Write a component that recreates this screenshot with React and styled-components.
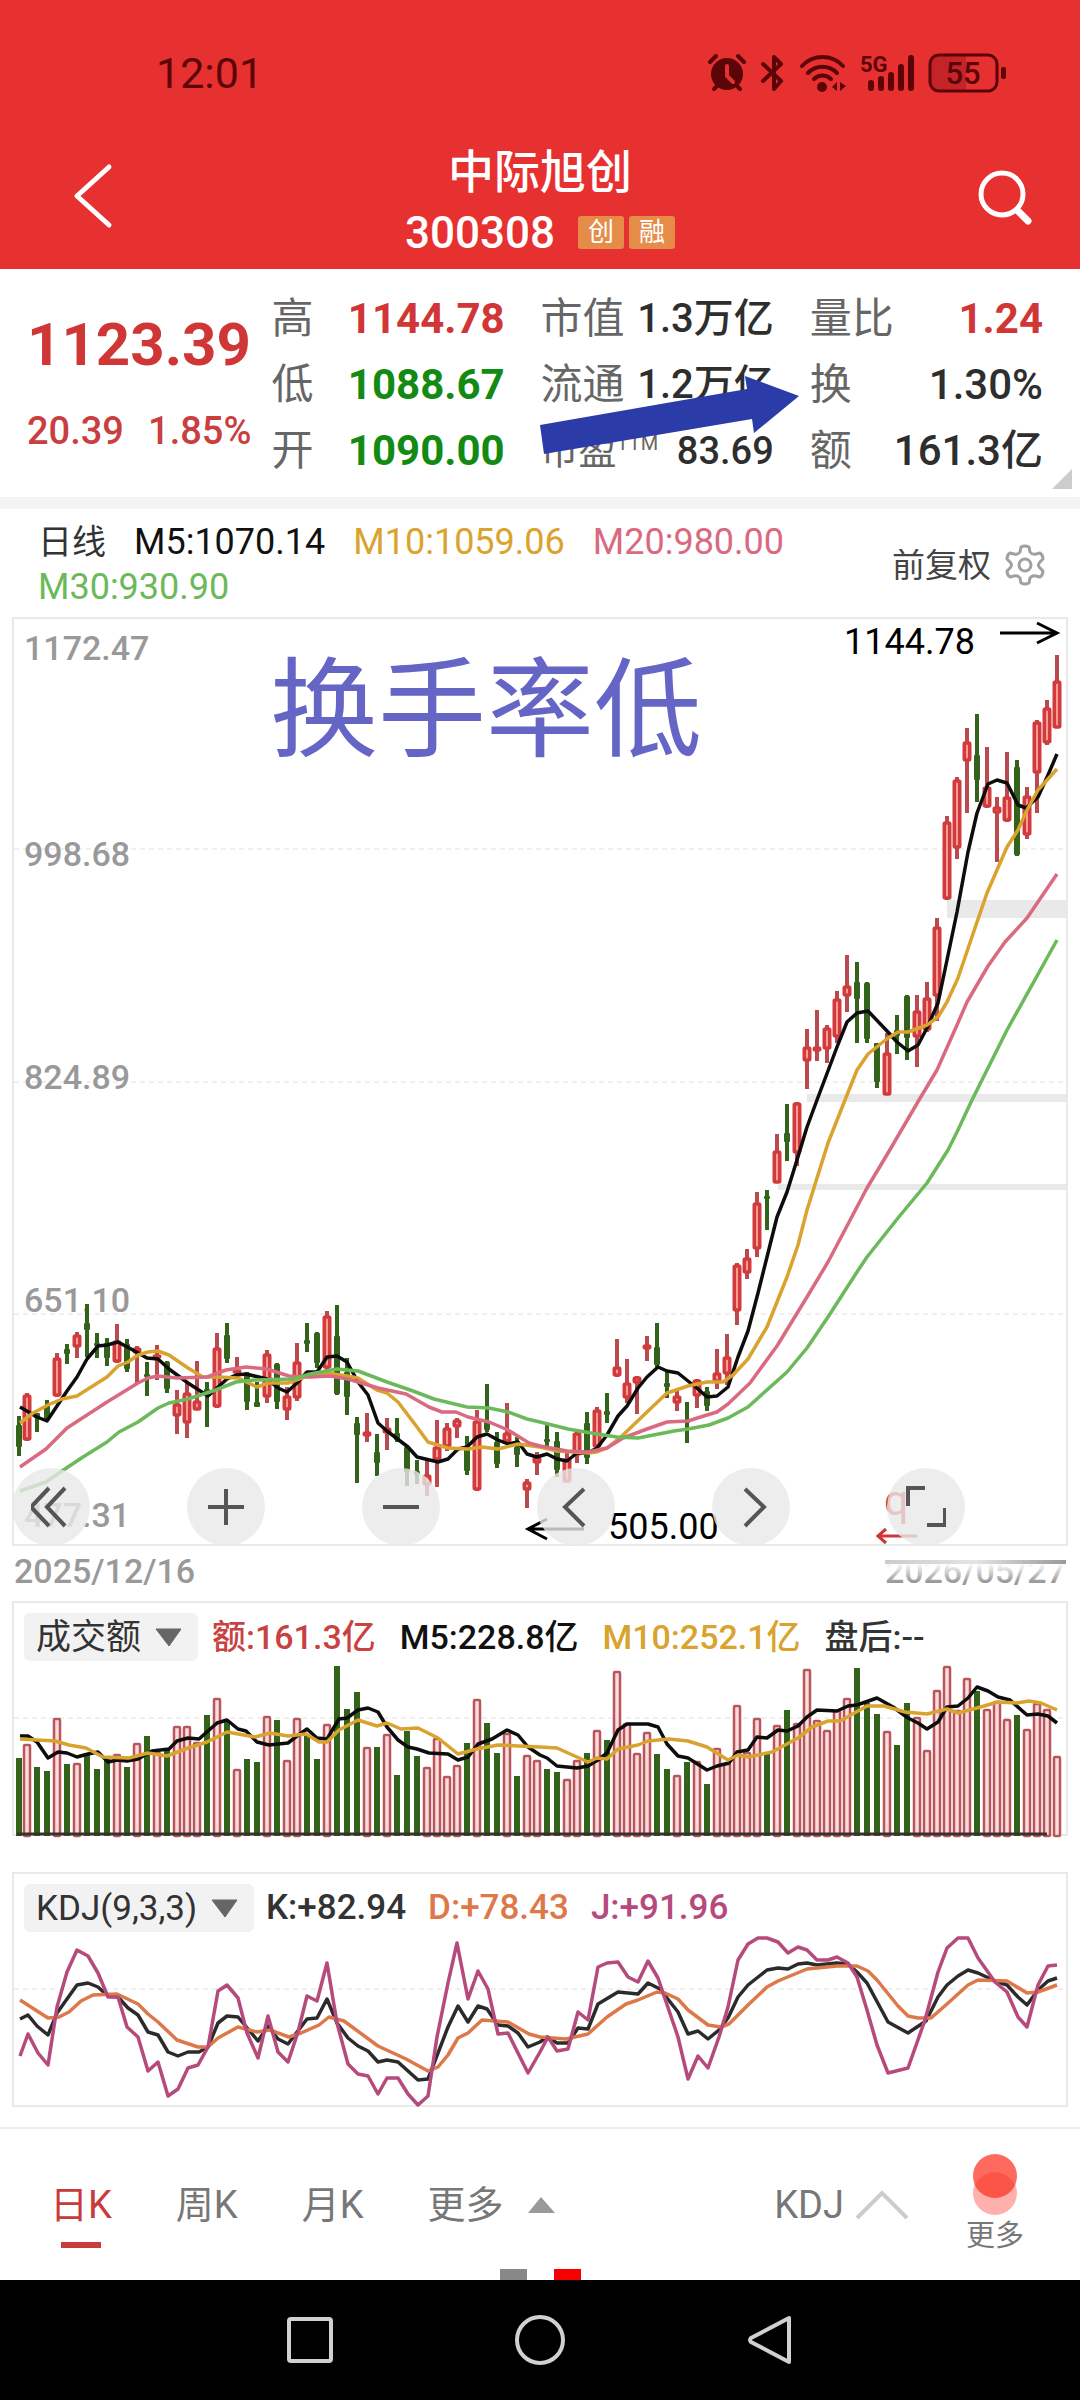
import React, { useState } from 'react';
import styled, { createGlobalStyle } from 'styled-components';

const GlobalStyle = createGlobalStyle`
  * {
    box-sizing: border-box;
  }

  body {
    margin: 0;
    background: #fff;
    font-family: Roboto, 'Noto Sans CJK SC', sans-serif;
  }

  button,
  select {
    font-family: inherit;
    color: inherit;
    background: none;
    border: 0;
    padding: 0;
    margin: 0;
    cursor: pointer;
  }

  svg {
    display: block;
  }
`;

const Page = styled.div`
  display: flex;
  flex-direction: column;
  min-height: 100vh;
`;

const Header = styled.header`
  background: #e73030;
  color: #fff;
`;

const StatusBar = styled.div`
  display: flex;
  align-items: center;
  justify-content: space-between;
  height: 146px;
  padding: 0 72px 0 156px;
  color: #5c0508;
  font-size: 43px;
`;

const TitleBar = styled.div`
  display: grid;
  grid-template-columns: 1fr auto 1fr;
  align-items: center;
  height: 123px;
  padding: 0 46px;
`;

const TitleBlock = styled.div`
  text-align: center;
`;

const HeaderButton = styled.button`
  justify-self: ${(props) => (props.$end ? 'end' : 'start')};
  padding: ${(props) => (props.$end ? '0 0 22px' : '0 0 22px 22px')};
`;

const Title = styled.h1`
  margin: 0;
  font-size: 46px;
  font-weight: 500;
  line-height: 50px;
`;

const CodeLine = styled.div`
  display: flex;
  align-items: center;
  height: 72px;
  font-size: 44px;
  font-weight: 500;
`;

const Tag = styled.span`
  width: 46px;
  margin-left: ${(props) => (props.$first ? 23 : 5)}px;
  border-radius: 3px;
  background: #e58d48;
  font-size: 26px;
  font-weight: 400;
  line-height: 33px;
`;

const Quote = styled.section`
  position: relative;
  display: grid;
  grid-template-columns: 224fr 770fr;
  column-gap: 20px;
  padding: 17px 37px 13px 27px;
  border-bottom: 12px solid #f4f4f4;
`;

const PriceBlock = styled.div`
  color: #d13636;
  padding-top: 19px;
`;

const Price = styled.div`
  font-size: 60px;
  font-weight: 700;
  line-height: 80px;
`;

const Change = styled.div`
  display: flex;
  justify-content: space-between;
  color: #c93e3e;
  font-size: 38px;
  font-weight: 500;
  line-height: 92px;
`;

const Stats = styled.dl`
  display: grid;
  grid-template-columns: repeat(3, 1fr);
  column-gap: 36px;
  margin: 0;
`;

const Stat = styled.div`
  display: flex;
  justify-content: space-between;
  line-height: 66px;
  white-space: nowrap;

  dt {
    color: #666;
    font-size: ${(props) => props.$label || 42}px;
  }

  dd {
    margin: 0;
    color: ${(props) => props.$color || '#2e2e2e'};
    font-size: ${(props) => props.$size || 42}px;
    font-weight: ${(props) => (props.$color ? 700 : 500)};
  }

  sup {
    font-size: 20px;
    line-height: 0;
  }
`;

const Pointer = styled.svg`
  position: absolute;
  left: 50%;
  top: 105px;
`;

const Corner = styled.span`
  position: absolute;
  right: 8px;
  bottom: 8px;
  border-left: 20px solid transparent;
  border-bottom: 20px solid #ccc;
`;

const LegendRow = styled.div`
  display: flex;
  align-items: center;
  padding: 11px 34px 7px 38px;
`;

const Legend = styled.div`
  display: flex;
  flex: 1;
  flex-wrap: wrap;
  column-gap: 28px;
  font-size: 36px;
  line-height: 45px;
`;

const LegendItem = styled.span`
  color: ${(props) => props.$color || '#111'};
`;

const Period = styled.span`
  color: #333;
  font-size: 34px;
`;

const AdjustButton = styled.button`
  display: flex;
  align-items: center;
  gap: 13px;
  color: #444;
  font-size: 33px;
  line-height: 45px;
`;

const Panel = styled.section`
  position: relative;
  margin: 0 12px ${(props) => props.$gap || 0}px;
  border: 2px solid #e9e9e9;
`;

const Plot = styled.svg`
  width: 100%;
  height: auto;
  overflow: visible;
`;

const Controls = styled.div`
  position: absolute;
  left: -2px;
  right: 0;
  bottom: -2px;
  display: flex;
  gap: 97px;
`;

const RoundButton = styled.button`
  display: flex;
  align-items: center;
  justify-content: center;
  width: 78px;
  height: 78px;
  border-radius: 50%;
  background: rgba(232, 232, 232, 0.8);
`;

const DateRow = styled.div`
  display: flex;
  justify-content: space-between;
  height: 55px;
  padding: 0 14px;
  color: #999;
  font-size: 34px;
  font-weight: 500;
  line-height: 50px;
`;

const EndDate = styled.span`
  position: relative;

  &::before {
    content: '';
    position: absolute;
    left: 0;
    right: 0;
    top: 0;
    height: 36px;
    background: linear-gradient(#fff 48%, rgba(255, 255, 255, 0));
  }

  &::after {
    content: '';
    position: absolute;
    left: 0;
    right: 0;
    top: 14px;
    height: 4px;
    background: linear-gradient(90deg, #ccc, #e4e4e4 50%, #999);
  }
`;

const PanelHeader = styled.div`
  display: flex;
  align-items: center;
  gap: ${(props) => props.$gap}px;
  padding: 10px 10px 0;
  font-size: ${(props) => props.$size}px;
  font-weight: 500;
  line-height: 50px;
  height: 58px;
`;

const SelectBox = styled.label`
  position: relative;
  margin-right: -10px;

  select {
    display: block;
    height: 48px;
    padding: 0 56px 0 12px;
    border-radius: 6px;
    background: #f2f2f2;
    color: #333;
    font-size: 35px;
    appearance: none;
  }

  svg {
    position: absolute;
    right: 16px;
    top: 15px;
    pointer-events: none;
  }
`;

const Toolbar = styled.nav`
  border-top: 2px solid #ececec;
`;

const ToolRow = styled.div`
  display: flex;
  align-items: center;
  justify-content: space-between;
  height: 140px;
  padding: 12px 56px 0 50px;
`;

const ToolGroup = styled.div`
  display: flex;
  align-items: center;
  gap: ${(props) => props.$gap}px;
`;

const Tab = styled.button`
  position: relative;
  display: flex;
  align-items: center;
  gap: ${(props) => props.$gap || 0}px;
  color: ${(props) => (props.$active ? '#c93a3a' : '#777')};
  font-size: 38px;
  line-height: 56px;

  &::after {
    content: '';
    display: ${(props) => (props.$active ? 'block' : 'none')};
    position: absolute;
    left: 50%;
    bottom: -15px;
    width: 40px;
    margin-left: -20px;
    height: 6px;
    background: #c93a3a;
  }
`;

const MoreButton = styled.button`
  display: flex;
  flex-direction: column;
  align-items: center;
  color: #777;
  font-size: 29px;
  line-height: 40px;
`;

const Dots = styled.div`
  display: flex;
  justify-content: center;
  gap: 27px;
`;

const Dot = styled.span`
  width: 27px;
  height: 11px;
  background: ${(props) => (props.$active ? '#f60000' : '#888')};
`;

const SystemNav = styled.footer`
  display: flex;
  flex: 1;
  align-items: center;
  justify-content: center;
  gap: 178px;
  min-height: 120px;
  background: #000;
`;

const RED = '#d13636';
const GREEN = '#138a13';
const GOLD = '#d9a32e';
const PINK = '#d96a80';
const LIME = '#6cb95b';
const ORANGE = '#dd7849';
const PURPLE = '#b64a7d';

// direction, high, body top, body bottom, low, volume top
const days = `
g 1416 1425 1447 1456 1758|r 1393 1395 1440 1441 1744|g 1413 1413 1418 1432 1767|g 1400 1405 1420 1421 1771
r 1353 1358 1396 1397 1718|g 1344 1349 1354 1364 1764|r 1332 1335 1347 1358 1763|g 1304 1323 1330 1357 1753
g 1333 1343 1346 1358 1769|g 1338 1343 1358 1366 1757|r 1324 1341 1362 1363 1754|g 1339 1344 1369 1372 1767
r 1346 1348 1353 1383 1743|g 1362 1374 1377 1396 1736|r 1345 1355 1358 1380 1752|g 1361 1362 1389 1393 1750
r 1390 1404 1416 1434 1726|r 1383 1393 1423 1438 1726|r 1361 1401 1410 1410 1742|g 1382 1389 1393 1427 1715
r 1333 1348 1407 1408 1698|g 1323 1335 1359 1363 1722|r 1357 1370 1373 1377 1769|g 1372 1375 1402 1410 1759
g 1382 1402 1407 1407 1762|r 1350 1354 1397 1403 1716|g 1363 1364 1402 1409 1720|r 1387 1396 1410 1420 1760
r 1343 1362 1398 1401 1718|g 1323 1340 1344 1352 1735|g 1332 1333 1363 1368 1759|r 1311 1316 1368 1370 1724
g 1305 1336 1394 1395 1666|g 1358 1372 1397 1415 1709|g 1417 1423 1435 1483 1692|r 1413 1432 1436 1442 1747
g 1434 1452 1463 1476 1747|r 1418 1428 1433 1450 1734|g 1418 1433 1440 1442 1775|g 1445 1447 1472 1486 1731
g 1460 1471 1475 1484 1756|r 1460 1475 1485 1496 1767|r 1420 1447 1460 1487 1738|r 1423 1428 1447 1451 1776
r 1418 1420 1427 1438 1765|g 1436 1447 1471 1475 1743|r 1410 1421 1490 1491 1699|g 1384 1422 1430 1432 1723
g 1432 1442 1464 1468 1753|r 1403 1433 1442 1443 1733|g 1437 1447 1455 1467 1776|r 1479 1482 1490 1508 1755
r 1452 1457 1463 1475 1760|g 1425 1439 1442 1446 1769|g 1432 1441 1470 1477 1772|r 1453 1459 1482 1482 1779
r 1430 1433 1455 1463 1760|g 1412 1423 1458 1464 1753|r 1407 1410 1447 1447 1730|g 1393 1411 1415 1423 1740
r 1339 1367 1376 1377 1671|r 1359 1383 1398 1403 1723|r 1376 1377 1383 1414 1753|r 1336 1345 1349 1361 1732
g 1323 1347 1365 1367 1754|g 1371 1383 1387 1398 1769|r 1389 1396 1403 1411 1775|g 1402 1421 1423 1443 1762
r 1379 1380 1396 1408 1761|g 1387 1391 1406 1411 1784|r 1349 1373 1382 1389 1748|r 1334 1357 1374 1385 1763
r 1263 1265 1311 1325 1705|r 1249 1258 1273 1279 1752|r 1192 1203 1249 1257 1718|g 1190 1196 1199 1230 1753
r 1134 1151 1183 1183 1725|g 1104 1133 1142 1161 1710|r 1102 1103 1153 1166 1723|r 1029 1047 1061 1089 1669
r 1010 1047 1051 1061 1720|r 1025 1028 1049 1063 1730|r 991 999 1037 1043 1710|r 955 986 996 1012 1698
g 962 982 999 1043 1668|g 982 983 1039 1043 1703|g 1043 1043 1082 1088 1714|r 1033 1053 1095 1095 1731
g 1015 1030 1036 1054 1745|g 995 996 1038 1060 1703|r 995 1011 1037 1067 1717|r 982 998 1030 1032 1750
r 918 927 996 1021 1690|r 816 822 899 900 1666|r 777 780 848 859 1710|r 728 742 761 813 1678
g 714 755 780 802 1691|r 747 787 807 808 1709|r 797 807 813 862 1701|r 752 797 821 822 1719
g 760 767 855 856 1715|r 787 796 835 839 1729|r 720 722 773 813 1703|r 700 708 743 745 1709
r 655 681 728 728 1756`
  .trim()
  .split(/[|\n]/)
  .map((row, i) => {
    const [dir, ...values] = row.split(' ');
    const [high, top, bottom, low, volume] = values.map(Number);
    return { x: i === 0 ? 19 : 17 + i * 10, up: dir === 'r', high, top, bottom, low, volume };
  });

const priceLines = [
  {
    color: '#0d0d0d',
    points:
      '20,1407 37,1417 47,1421 67,1391 77,1377 87,1359 98,1346 107,1345 118,1342 131,1349 147,1358 158,1359 169,1369 188,1383 208,1396 227,1379 236,1375 246,1374 267,1379 278,1388 287,1392 297,1383 307,1372 317,1372 327,1357 337,1356 347,1362 358,1382 368,1395 378,1423 387,1431 408,1447 417,1457 438,1462 448,1459 458,1449 467,1447 477,1437 487,1434 498,1440 508,1444 518,1442 527,1454 537,1457 547,1454 557,1459 567,1461 577,1453 588,1453 597,1448 607,1435 618,1416 627,1406 638,1388 647,1377 658,1367 667,1371 678,1373 688,1381 698,1389 707,1397 717,1396 728,1387 738,1357 748,1331 758,1293 767,1257 777,1217 787,1192 797,1160 807,1127 817,1100 837,1047 847,1022 857,1013 868,1011 888,1032 897,1042 908,1051 918,1045 927,1028 938,1003 947,960 957,912 968,852 977,813 988,784 997,780 1007,783 1018,805 1026,808 1038,797 1048,775 1057,754',
  },
  {
    color: GOLD,
    points:
      '20,1423 33,1413 48,1405 62,1399 77,1396 88,1389 107,1377 118,1366 128,1362 138,1355 148,1352 158,1351 169,1355 188,1368 203,1377 217,1377 238,1378 257,1387 268,1383 288,1383 307,1376 327,1373 347,1376 358,1378 377,1390 387,1393 398,1402 417,1427 428,1442 448,1448 468,1449 482,1447 498,1449 518,1444 540,1447 557,1451 588,1453 597,1452 607,1448 623,1435 647,1412 667,1393 688,1386 707,1382 723,1382 733,1375 748,1359 767,1327 787,1277 798,1245 807,1210 828,1143 845,1100 857,1070 868,1054 888,1038 898,1032 908,1032 927,1025 938,1017 947,1002 958,978 976,925 987,893 1007,847 1018,830 1027,810 1038,790 1057,769',
  },
  {
    color: PINK,
    points:
      '20,1467 46,1449 67,1428 107,1402 138,1383 148,1378 158,1376 177,1378 207,1377 226,1370 246,1367 267,1369 289,1376 310,1377 330,1376 348,1379 378,1388 406,1394 429,1407 442,1412 456,1412 468,1417 489,1422 508,1430 529,1443 540,1446 567,1451 588,1452 607,1448 623,1438 647,1429 667,1422 688,1421 707,1415 717,1412 728,1404 750,1383 777,1346 807,1297 828,1262 867,1188 888,1153 919,1100 937,1070 957,1025 967,1002 988,966 1005,942 1027,918 1057,874',
  },
  {
    color: LIME,
    points:
      '20,1491 46,1482 62,1471 83,1457 107,1442 119,1432 138,1422 158,1408 169,1403 188,1399 213,1391 236,1382 255,1380 293,1379 310,1374 337,1369 358,1371 387,1382 413,1391 434,1399 467,1407 489,1408 508,1412 527,1419 540,1422 568,1429 597,1434 617,1437 638,1438 674,1431 688,1429 709,1425 728,1418 748,1407 787,1372 807,1348 828,1317 857,1272 867,1257 898,1218 927,1183 948,1150 957,1132 972,1100 987,1070 1007,1030 1057,940',
  },
];

const volumeLines = [
  {
    color: '#0d0d0d',
    points:
      '20,1736 28,1736 37,1742 48,1758 58,1752 67,1753 77,1757 88,1754 98,1752 108,1762 117,1760 127,1761 138,1759 152,1751 169,1749 177,1741 188,1738 199,1739 217,1723 227,1720 238,1729 246,1731 257,1742 269,1745 288,1743 297,1736 307,1729 317,1738 327,1739 339,1719 347,1718 358,1710 368,1708 378,1712 387,1727 398,1740 408,1747 417,1749 429,1753 448,1754 458,1760 468,1757 478,1744 492,1739 507,1730 518,1735 528,1747 540,1755 547,1758 557,1766 577,1768 588,1766 598,1760 607,1753 618,1730 627,1724 648,1724 658,1727 667,1744 678,1756 688,1758 707,1770 717,1766 729,1763 737,1752 748,1750 757,1737 767,1738 778,1730 787,1731 798,1726 807,1717 817,1710 837,1711 848,1706 857,1705 877,1698 893,1707 908,1718 918,1723 927,1729 938,1722 947,1707 958,1706 968,1698 977,1687 988,1691 998,1697 1010,1700 1027,1715 1038,1714 1048,1716 1057,1723',
  },
  {
    color: GOLD,
    points:
      '20,1739 55,1741 69,1745 86,1748 103,1757 129,1758 148,1753 167,1756 188,1748 207,1742 227,1732 255,1737 270,1733 288,1736 306,1734 319,1742 327,1742 339,1730 358,1720 377,1726 387,1723 401,1729 418,1728 438,1738 458,1754 477,1749 498,1745 540,1747 557,1748 588,1762 597,1758 607,1759 618,1749 638,1745 648,1741 669,1739 688,1741 707,1747 728,1760 738,1755 748,1757 772,1752 798,1738 812,1727 828,1721 840,1721 867,1706 884,1706 905,1712 927,1714 947,1709 958,1713 977,1708 998,1702 1017,1703 1029,1701 1041,1703 1057,1710',
  },
];

const kdjLines = [
  {
    color: '#2b2b2b',
    points:
      '20,2019 28,2015 37,2026 48,2035 57,2013 77,1985 88,1983 98,1987 108,1996 118,1997 128,2008 138,2015 148,2032 158,2035 168,2052 178,2056 188,2052 199,2052 208,2047 218,2023 227,2016 238,2017 258,2041 268,2026 278,2039 288,2044 307,2019 317,2018 327,1999 337,2023 348,2038 358,2046 368,2051 378,2062 387,2060 398,2062 418,2080 428,2079 448,2027 458,2006 468,2022 478,2006 487,2009 498,2025 508,2026 518,2033 528,2047 540,2042 547,2037 557,2043 568,2043 578,2028 588,2029 598,2004 618,1992 638,1994 648,1983 660,1989 678,2012 688,2034 698,2031 708,2039 719,2030 728,2018 738,1997 748,1985 767,1970 778,1968 788,1969 798,1964 807,1963 817,1965 837,1963 848,1964 857,1972 867,1983 888,2022 908,2033 926,2021 938,1997 947,1985 958,1976 968,1970 978,1973 995,1981 1007,1985 1018,1997 1027,2005 1038,1990 1048,1981 1057,1978',
  },
  {
    color: ORANGE,
    points:
      '20,2000 48,2018 59,2017 69,2012 81,2001 93,1995 117,1994 138,2004 148,2014 158,2022 177,2040 198,2047 208,2047 218,2038 238,2027 257,2032 270,2030 289,2037 301,2033 319,2025 329,2017 344,2021 378,2046 406,2059 428,2071 438,2067 448,2055 458,2038 468,2033 482,2020 508,2022 529,2034 540,2037 566,2039 588,2034 607,2017 626,2004 638,2000 657,1992 665,1993 678,1999 688,2010 708,2025 721,2027 729,2024 748,2005 767,1987 778,1981 807,1969 837,1966 857,1966 868,1971 877,1980 898,2006 908,2016 918,2018 931,2018 947,2004 968,1985 978,1980 1007,1981 1027,1993 1038,1992 1057,1985',
  },
  {
    color: PURPLE,
    points:
      '20,2056 28,2034 38,2053 48,2065 57,2007 67,1972 77,1950 88,1956 98,1973 108,1997 118,1997 127,2027 138,2037 148,2071 158,2062 168,2096 178,2089 188,2068 198,2065 208,2047 218,1991 227,1985 238,1998 247,2033 258,2058 268,2016 278,2052 288,2062 298,2032 307,1996 317,2001 327,1963 337,2023 348,2064 358,2074 368,2076 378,2094 387,2078 398,2078 408,2094 418,2105 428,2096 437,2037 448,1983 457,1943 468,1999 478,1971 488,1989 498,2034 508,2033 528,2073 540,2052 548,2037 557,2051 568,2049 578,2012 588,2020 598,1967 607,1963 618,1962 628,1977 638,1982 648,1961 658,1978 678,2037 688,2079 698,2056 708,2068 719,2037 728,2007 738,1960 748,1944 758,1938 767,1938 778,1942 788,1953 798,1947 807,1950 817,1960 828,1960 837,1957 848,1963 857,1977 867,2010 877,2045 888,2073 908,2068 925,2020 938,1972 947,1948 958,1938 968,1938 978,1958 995,1982 1007,1992 1018,2017 1027,2027 1038,1985 1048,1966 1057,1965',
  },
];

const axis = [
  { label: '1172.47', y: 660 },
  { label: '998.68', y: 866, line: 849 },
  { label: '824.89', y: 1089, line: 1082 },
  { label: '651.10', y: 1312, line: 1314 },
  { label: '477.31', y: 1527 },
];

const Lines = ({ lines }) =>
  lines.map((line) => (
    <polyline
      key={line.color}
      points={line.points}
      fill="none"
      stroke={line.color}
      strokeWidth="3.500"
      strokeLinejoin="round"
    />
  ));

const Grid = ({ y }) => <path d={`M14 ${y}H1066`} stroke="#e0e0e0" strokeWidth="1" strokeDasharray="5 4" />;

const Candle = ({ day }) => {
  const { x, up, high, top, bottom, low } = day;
  if (up) {
    return (
      <g>
        <path d={`M${x} ${high}V${low}`} stroke="#b94a50" strokeWidth="4" />
        <rect
          x={x - 2.75}
          y={top + 1}
          width="5.500"
          height={Math.max(bottom - top - 2, 1)}
          rx="1"
          fill="#ff9a90"
          stroke="#d23b3d"
          strokeWidth="3.500"
        />
      </g>
    );
  }
  return (
    <g fill="#33621a">
      <rect x={x - 2} y={high} width="4" height={low - high} />
      <rect x={x - 3} y={top} width="6" height={Math.max(bottom - top, 2)} rx="1" />
    </g>
  );
};

const VolumeBar = ({ day }) => {
  if (day.up) {
    return (
      <rect
        x={day.x - 3}
        y={day.volume + 1}
        width="6"
        height={1835 - day.volume}
        rx="1"
        fill="#fbdcdc"
        stroke="#b8565b"
        strokeWidth="2.500"
      />
    );
  }
  return <rect x={day.x - 3} y={day.volume} width="6" height={1836 - day.volume} fill="#33621a" />;
};

const StatusIcons = () => (
  <svg width="300" height="40" viewBox="708 53 300 40" fill="currentColor" aria-hidden="true">
    <circle cx="727" cy="74" r="16" />
    <path
      d="M710 62l6-6M744 62l-6-6M714 89l5-5M740 89l-5-5"
      stroke="currentColor"
      strokeWidth="4"
      strokeLinecap="round"
    />
    <path d="M727 66v10l6 6" fill="none" stroke="#e73030" strokeWidth="4" strokeLinecap="round" />
    <path
      d="M763 64l18 17-7 8V57l7 7-18 17"
      fill="none"
      stroke="currentColor"
      strokeWidth="4"
      strokeLinecap="round"
      strokeLinejoin="round"
    />
    <g fill="none" stroke="currentColor" strokeWidth="4" strokeLinecap="round">
      <path d="M802 66a28 28 0 0 1 41 0" />
      <path d="M808 73a20 20 0 0 1 29 0" />
      <path d="M814 79a12 12 0 0 1 17 0" />
    </g>
    <circle cx="822" cy="87" r="5" />
    <path d="M832 87l5-5v9zM846 86l-6 5v-9z" />
    <text x="860" y="72" fontSize="22" fontWeight="700">
      5G
    </text>
    <path
      d="M871 83v5M881 79v9M891 75v13M901 67v21M911 58v30"
      stroke="currentColor"
      strokeWidth="6"
      strokeLinecap="round"
    />
    <path d="M938 56h28v34h-28a7 7 0 0 1-7-7V63a7 7 0 0 1 7-7z" fill="#c42427" />
    <rect x="930" y="55" width="67" height="36" rx="9" fill="none" stroke="currentColor" strokeWidth="3" />
    <rect x="1001" y="67" width="5" height="12" rx="2" />
    <text x="963" y="84" fontSize="31" fontWeight="500" textAnchor="middle">
      55
    </text>
  </svg>
);

const Caret = () => (
  <svg width="27" height="19" viewBox="0 0 27 19" aria-hidden="true">
    <path d="M1 1h25L14 18z" fill="#666" stroke="#666" strokeLinejoin="round" />
  </svg>
);

const Gear = () => (
  <svg width="42" height="42" viewBox="0 0 42 42" fill="none" stroke="#a0a0a0" strokeWidth="3" strokeLinejoin="round">
    <path d="M17 3Q21 1 25 3L26 8Q28 11 32 10L36 9Q39 11 39 15L36 18Q33 21 36 24L39 27Q39 31 36 33L32 32Q28 31 26 34L25 39Q21 41 17 39L16 34Q14 31 10 32L6 33Q3 31 3 27L6 24Q9 21 6 18L3 15Q3 11 6 9L10 10Q14 11 16 8z" />
    <circle cx="21" cy="21" r="6" />
  </svg>
);

const controls = [
  { label: '最左', d: 'M18 2L0 21l18 19M34 2L16 21l18 19' },
  { label: '放大', d: 'M2 21h36M20 3v36' },
  { label: '缩小', d: 'M2 21h36' },
  { label: '左移', d: 'M28 3L9 21l19 19' },
  { label: '右移', d: 'M14 3l19 18-19 19' },
  { label: '全屏', d: 'M2 20V2h17M39 22v17H21' },
];

const App = () => {
  const [tab, setTab] = useState('日K');

  return (
    <Page>
      <GlobalStyle />
      <Header>
        <StatusBar>
          <span>12:01</span>
          <StatusIcons />
        </StatusBar>
        <TitleBar>
          <HeaderButton type="button" aria-label="返回">
            <svg width="50" height="72" viewBox="0 0 50 72" fill="none" stroke="#fff" strokeWidth="5">
              <path d="M41 6L9 35l32 29" strokeLinecap="round" strokeLinejoin="round" />
            </svg>
          </HeaderButton>
          <TitleBlock>
            <Title>中际旭创</Title>
            <CodeLine>
              300308
              <Tag $first>创</Tag>
              <Tag>融</Tag>
            </CodeLine>
          </TitleBlock>
          <HeaderButton type="button" aria-label="搜索" $end>
            <svg width="56" height="56" viewBox="0 0 56 56" fill="none" stroke="#fff">
              <circle cx="24" cy="25" r="21" strokeWidth="5" />
              <path d="M40 42l10 10" strokeWidth="7" strokeLinecap="round" />
            </svg>
          </HeaderButton>
        </TitleBar>
      </Header>

      <Quote>
        <PriceBlock>
          <Price>1123.39</Price>
          <Change>
            <span>20.39</span>
            <span>1.85%</span>
          </Change>
        </PriceBlock>
        <Stats>
          <Stat $color={RED}>
            <dt>高</dt>
            <dd>1144.78</dd>
          </Stat>
          <Stat $size={40}>
            <dt>市值</dt>
            <dd>1.3万亿</dd>
          </Stat>
          <Stat $color={RED}>
            <dt>量比</dt>
            <dd>1.24</dd>
          </Stat>
          <Stat $color={GREEN}>
            <dt>低</dt>
            <dd>1088.67</dd>
          </Stat>
          <Stat $size={40}>
            <dt>流通</dt>
            <dd>1.2万亿</dd>
          </Stat>
          <Stat>
            <dt>换</dt>
            <dd>1.30%</dd>
          </Stat>
          <Stat $color={GREEN}>
            <dt>开</dt>
            <dd>1090.00</dd>
          </Stat>
          <Stat $size={38} $label={38}>
            <dt>
              市盈<sup>TTM</sup>
            </dt>
            <dd>83.69</dd>
          </Stat>
          <Stat>
            <dt>额</dt>
            <dd>161.3亿</dd>
          </Stat>
        </Stats>
        <Pointer width="262" height="84" viewBox="540 374 262 84" aria-hidden="true">
          <path d="M540 425L747 389 745 376 799 396 754 433 752 419 544 454z" fill="#2b3ba8" />
        </Pointer>
        <Corner />
      </Quote>

      <LegendRow>
        <Legend>
          <Period>日线</Period>
          <LegendItem>M5:1070.14</LegendItem>
          <LegendItem $color={GOLD}>M10:1059.06</LegendItem>
          <LegendItem $color={PINK}>M20:980.00</LegendItem>
          <LegendItem $color={LIME}>M30:930.90</LegendItem>
        </Legend>
        <AdjustButton type="button">
          前复权
          <Gear />
        </AdjustButton>
      </LegendRow>

      <Panel>
        <Plot viewBox="14 619 1052 925" role="img" aria-label="日K线图">
          {axis.filter((tick) => tick.line).map((tick) => (
            <Grid key={tick.label} y={tick.line} />
          ))}
          <path d="M947 900h119v18H947zM807 1094h259v8H807zM778 1184h288v6H778z" fill="#e9e9e9" />
          {axis.map((tick) => (
            <text key={tick.label} x="24" y={tick.y} fontSize="34" fontWeight="500" fill="#999">
              {tick.label}
            </text>
          ))}
          {days.map((day) => (
            <Candle key={day.x} day={day} />
          ))}
          <Lines lines={priceLines} />
          <text x="844" y="654" fontSize="36">
            1144.78
          </text>
          <text x="608" y="1539" fontSize="36">
            505.00
          </text>
          <g fill="none" strokeWidth="3">
            <path d="M1000 633h57M1037 623l20 10-20 10M584 1529h-56M547 1519l-19 10 19 10" stroke="#000" />
            <path d="M917 1536h-39M886 1529l-8 7 8 7" stroke={RED} />
          </g>
          <text x="884" y="1515" fontSize="43" fill={RED}>
            q
          </text>
          <text x="270" y="748" fontSize="108" fill="#6565c6">
            换手率低
          </text>
        </Plot>
        <Controls>
          {controls.map((control) => (
            <RoundButton key={control.label} type="button" aria-label={control.label}>
              <svg width="40" height="42" viewBox="0 0 40 42" fill="none" stroke="#555" strokeWidth="4">
                <path d={control.d} />
              </svg>
            </RoundButton>
          ))}
        </Controls>
      </Panel>

      <DateRow>
        <span>2025/12/16</span>
        <EndDate>2026/05/27</EndDate>
      </DateRow>

      <Panel $gap={36}>
        <PanelHeader $size={34} $gap={24}>
          <SelectBox>
            <select aria-label="成交指标">
              <option>成交额</option>
              <option>成交量</option>
            </select>
            <Caret />
          </SelectBox>
          <LegendItem $color="#c94242">额:161.3亿</LegendItem>
          <LegendItem>M5:228.8亿</LegendItem>
          <LegendItem $color={GOLD}>M10:252.1亿</LegendItem>
          <LegendItem $color="#333">盘后:--</LegendItem>
        </PanelHeader>
        <Plot viewBox="14 1661 1052 173" role="img" aria-label="成交额">
          <Grid y={1718} />
          {days.map((day) => (
            <VolumeBar key={day.x} day={day} />
          ))}
          <path d="M17 1834h1030" stroke="#3a3030" strokeWidth="3" />
          <Lines lines={volumeLines} />
        </Plot>
      </Panel>

      <Panel $gap={20}>
        <PanelHeader $size={35} $gap={22}>
          <SelectBox>
            <select aria-label="技术指标">
              <option>KDJ(9,3,3)</option>
              <option>MACD</option>
            </select>
            <Caret />
          </SelectBox>
          <LegendItem $color="#333">K:+82.94</LegendItem>
          <LegendItem $color={ORANGE}>D:+78.43</LegendItem>
          <LegendItem $color={PURPLE}>J:+91.96</LegendItem>
        </PanelHeader>
        <Plot viewBox="14 1932 1052 173" role="img" aria-label="KDJ">
          <Grid y={1989} />
          <Lines lines={kdjLines} />
        </Plot>
      </Panel>

      <Toolbar>
        <ToolRow>
          <ToolGroup $gap={64}>
            {['日K', '周K', '月K'].map((name) => (
              <Tab key={name} type="button" $active={tab === name} onClick={() => setTab(name)}>
                {name}
              </Tab>
            ))}
            <Tab type="button" $gap={24}>
              更多
              <svg width="27" height="16" viewBox="0 0 27 16" aria-hidden="true">
                <path d="M0 16L13 0l14 16z" fill="#999" />
              </svg>
            </Tab>
          </ToolGroup>
          <ToolGroup $gap={57}>
            <Tab type="button" $gap={11}>
              KDJ
              <svg width="54" height="30" viewBox="0 0 54 30" fill="none" stroke="#ccc" strokeWidth="4">
                <path d="M2 28L27 3l25 25" />
              </svg>
            </Tab>
            <MoreButton type="button">
              <svg width="44" height="62" viewBox="0 0 44 62" aria-hidden="true">
                <circle cx="22" cy="39" r="22" fill="#ffb0ac" />
                <circle cx="22" cy="22" r="22" fill="#ff6a5e" />
                <path d="M2 31a22 22 0 0 1 40 0a22 22 0 0 1-40 0z" fill="#fb5547" />
              </svg>
              更多
            </MoreButton>
          </ToolGroup>
        </ToolRow>
        <Dots>
          <Dot />
          <Dot $active />
        </Dots>
      </Toolbar>

      <SystemNav>
        <button type="button" aria-label="最近任务">
          <svg width="52" height="52" viewBox="0 0 52 52" fill="none" stroke="#d0d0d0" strokeWidth="4">
            <rect x="5" y="5" width="42" height="42" rx="2" />
          </svg>
        </button>
        <button type="button" aria-label="主页">
          <svg width="52" height="52" viewBox="0 0 52 52" fill="none" stroke="#d0d0d0" strokeWidth="4">
            <circle cx="26" cy="26" r="23" />
          </svg>
        </button>
        <button type="button" aria-label="返回上一页">
          <svg width="52" height="52" viewBox="0 0 52 52" fill="none" stroke="#d0d0d0" strokeWidth="4">
            <path d="M45 4v44L7 28q-2-2 0-4z" strokeLinejoin="round" />
          </svg>
        </button>
      </SystemNav>
    </Page>
  );
};

export default App;
